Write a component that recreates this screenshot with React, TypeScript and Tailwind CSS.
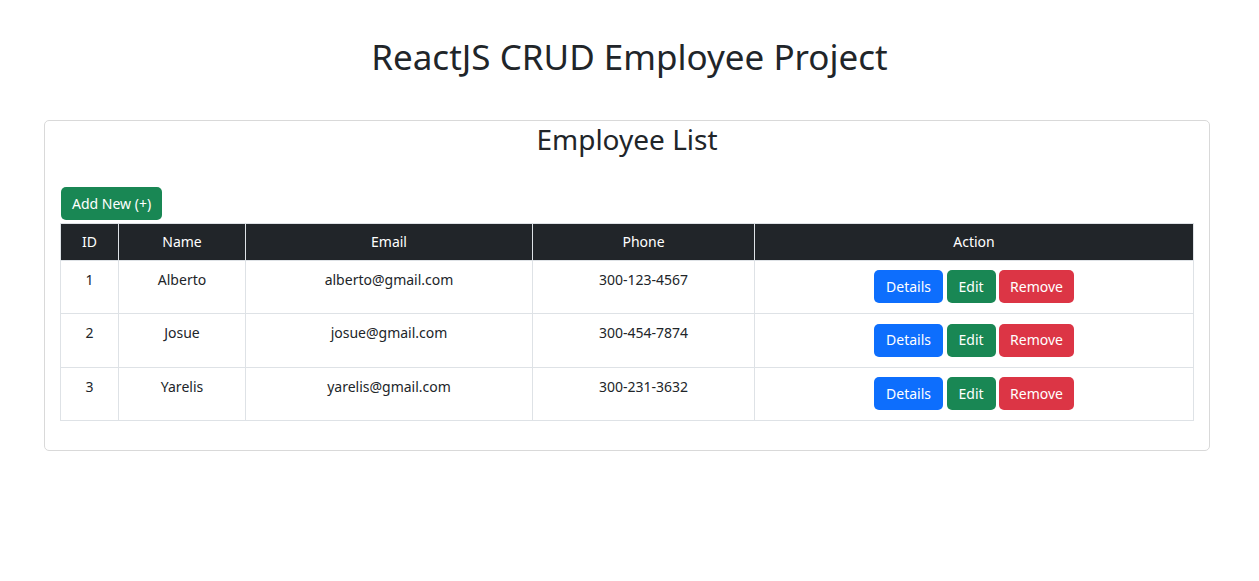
const employees = [
  { id: 1, name: 'Alberto', email: 'alberto@gmail.com', phone: '300-123-4567' },
  { id: 2, name: 'Josue', email: 'josue@gmail.com', phone: '300-454-7874' },
  { id: 3, name: 'Yarelis', email: 'yarelis@gmail.com', phone: '300-231-3632' },
];

export default function App() {
  return (
    <div
      className="min-h-screen bg-white text-[#212529]"
      style={{ fontFamily: '"Noto Sans", "Open Sans", sans-serif' }}
    >
      <h1 className="pt-[36px] text-center text-[35px] leading-[1.2] font-normal">
        ReactJS CRUD Employee Project
      </h1>

      <div className="ml-[44px] mr-[49px] mt-[42px] rounded-[5px] border border-[#d9d9d9] px-[15px] pb-[29px]">
        <h2 className="pt-[2px] text-center text-[28px] leading-[1.2] font-normal">Employee List</h2>

        <div className="mt-[30px] mb-[3px] pl-[1px]">
          <button className="h-[33px] rounded-[5px] bg-[#198754] px-[11px] text-[14px] text-white">
            Add New (+)
          </button>
        </div>

        <table className="w-full table-fixed border-collapse text-[14px] leading-[22px]">
          <colgroup>
            <col className="w-[58px]" />
            <col className="w-[127px]" />
            <col className="w-[287px]" />
            <col className="w-[222px]" />
            <col />
          </colgroup>
          <thead>
            <tr className="h-[37px] bg-[#212529] text-white">
              {['ID', 'Name', 'Email', 'Phone', 'Action'].map((h) => (
                <th key={h} className="border border-[#dee2e6] px-2 text-center font-normal">
                  {h}
                </th>
              ))}
            </tr>
          </thead>
          <tbody>
            {employees.map((e) => (
              <tr key={e.id} className="h-[53.5px]">
                <td className="border border-[#dee2e6] px-2 pt-[8px] align-top text-center">{e.id}</td>
                <td className="border border-[#dee2e6] px-2 pt-[8px] align-top text-center">{e.name}</td>
                <td className="border border-[#dee2e6] px-2 pt-[8px] align-top text-center">{e.email}</td>
                <td className="border border-[#dee2e6] px-2 pt-[8px] align-top text-center">{e.phone}</td>
                <td className="border border-[#dee2e6] px-2 align-middle">
                  <div className="flex justify-center gap-[3.5px]">
                    <button className="h-[33px] rounded-[5px] bg-[#0d6efd] px-[12px] text-white">Details</button>
                    <button className="h-[33px] rounded-[5px] bg-[#198754] px-[12px] text-white">Edit</button>
                    <button className="h-[33px] rounded-[5px] bg-[#dc3545] px-[11px] text-white">Remove</button>
                  </div>
                </td>
              </tr>
            ))}
          </tbody>
        </table>
      </div>
    </div>
  );
}
